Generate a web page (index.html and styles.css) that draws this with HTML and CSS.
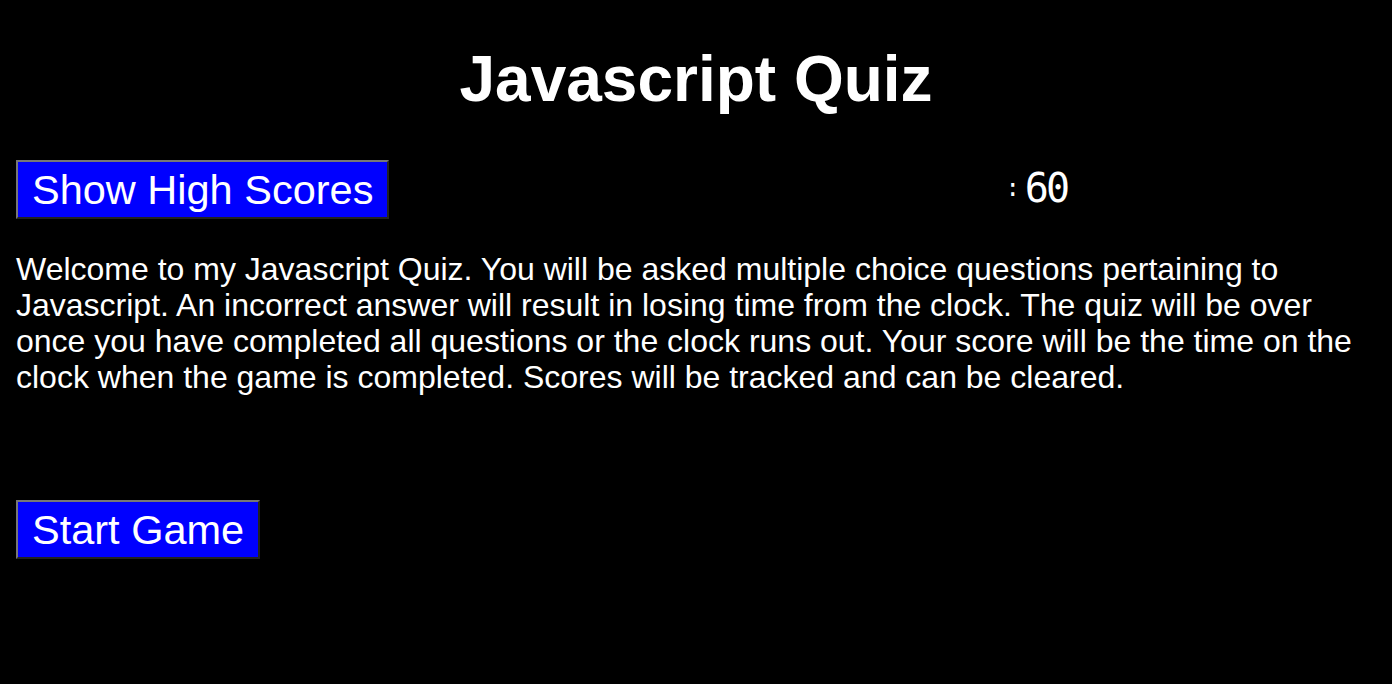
FILE: index.html
```html
<!DOCTYPE html>
<html lang="en">
<head>
<meta charset="utf-8">
<title>Javascript Quiz</title>
<link rel="stylesheet" href="styles.css">
</head>
<body>
<header class="page-header">
  <h1 class="title">Javascript Quiz</h1>
</header>
<div class="controls">
  <button class="btn">Show High Scores</button>
  <div class="timer"><span class="timer-colon">:</span><span class="timer-digits">60</span></div>
</div>
<p class="intro">Welcome to my Javascript Quiz. You will be asked multiple choice questions pertaining to Javascript. An incorrect answer will result in losing time from the clock. The quiz will be over once you have completed all questions or the clock runs out. Your score will be the time on the clock when the game is completed. Scores will be tracked and can be cleared.</p>
<div class="start">
  <button class="btn">Start Game</button>
</div>
</body>
</html>
```
FILE: styles.css
```css
html, body {
  background: #000;
}
body {
  margin: 0;
  padding: 0 16px;
  color: #fff;
  font-family: "Liberation Sans", Arial, sans-serif;
}
.title {
  margin: 0;
  padding-top: 42px;
  font-size: 64px;
  line-height: 74px;
  font-weight: bold;
  text-align: center;
}
.controls {
  margin-top: 44px;
  display: flex;
  align-items: center;
  height: 59px;
}
.btn {
  font-family: "Liberation Sans", Arial, sans-serif;
  font-size: 41.5px;
  line-height: 47px;
  height: 59px;
  color: #fff;
  background: #0000ff;
  border: 2px solid;
  border-color: #767676 #222 #222 #767676;
  padding: 4px 14px;
  margin: 0;
  cursor: pointer;
}
.timer {
  margin-left: 616px;
  padding-bottom: 4px;
  display: flex;
  align-items: center;
  gap: 5px;
  font-family: "DejaVu Sans Mono", monospace;
  font-weight: 200;
  color: #fff;
}
.timer-colon {
  font-size: 24px;
}
.timer-digits {
  font-size: 40px;
  letter-spacing: -3px;
}
.intro {
  margin: 32px 0 0;
  font-size: 32px;
  line-height: 36px;
}
.start {
  margin-top: 105px;
}
```
